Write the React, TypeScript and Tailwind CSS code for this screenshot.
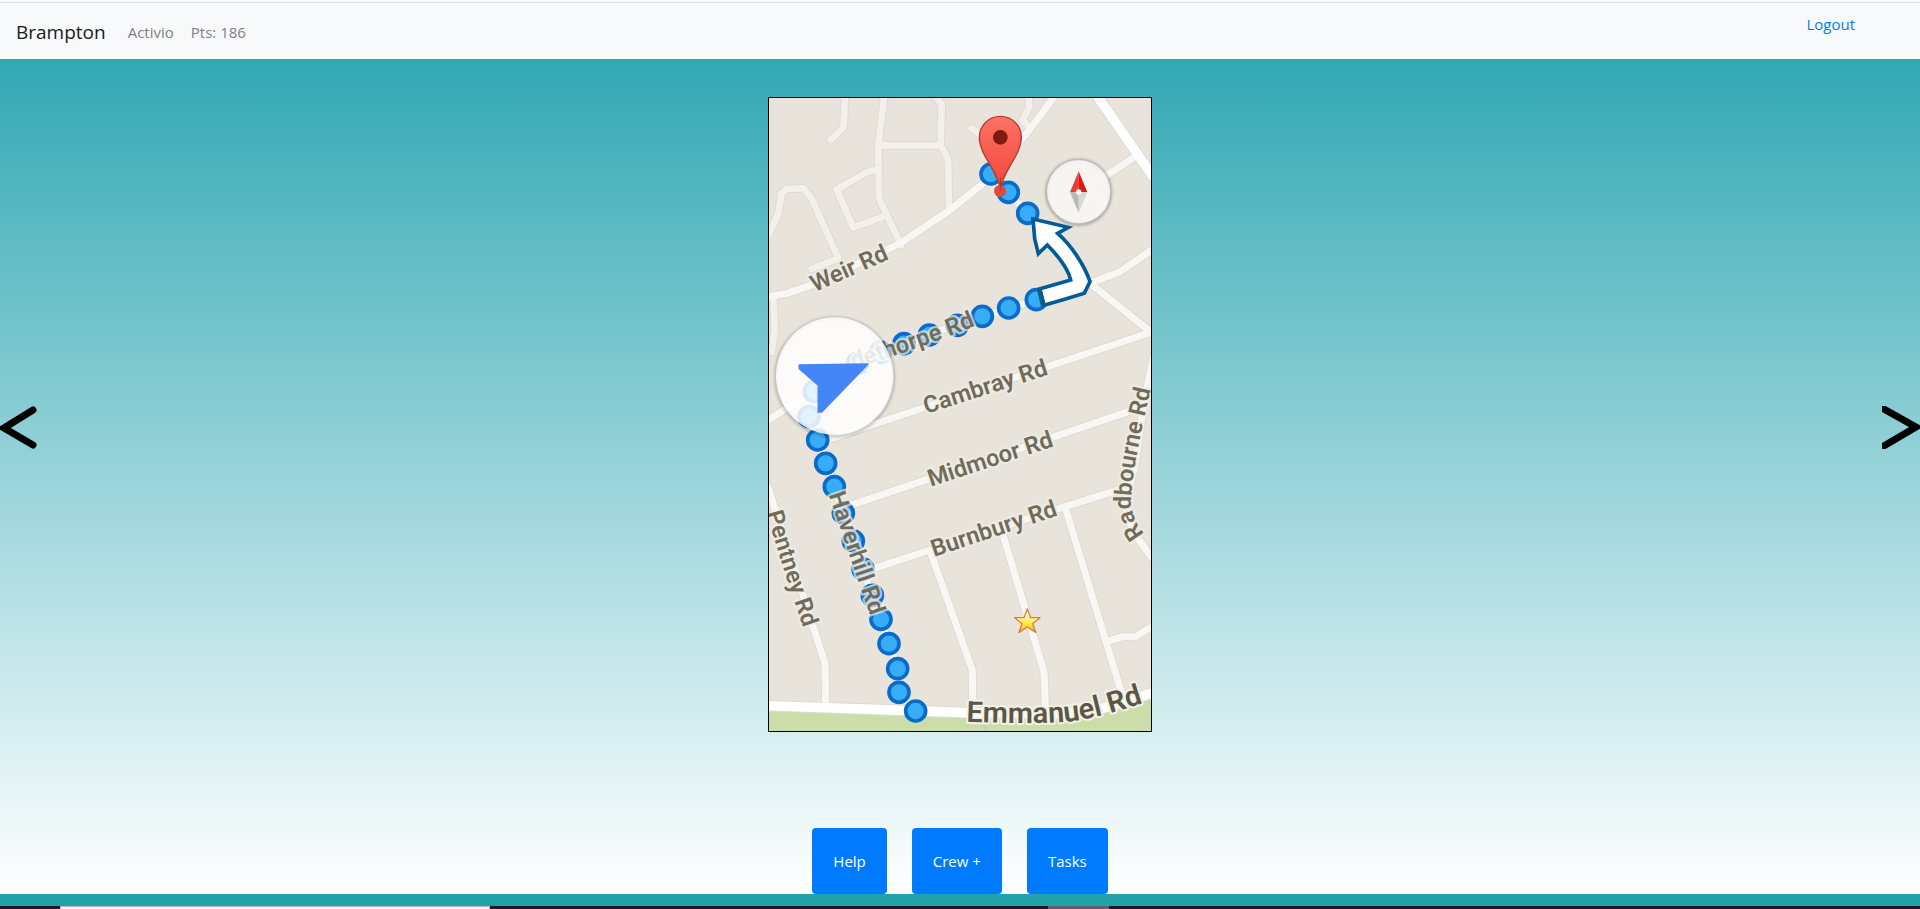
import React from "react";

const minorRoads: string[] = [
  "M231 -5 L227 91 L188 129",
  "M349 -5 L331 144 L333 305 L400 445",
  "M331 145 H512",
  "M500 -10 L521 24 L518 144 L540 186 L543 335",
  "M331 217 L296 226 L206 277 L256 392 L351 357",
  "M0 419 L31 349 L41 289 L56 276 L106 274 L131 304 L211 484 L131 516",
  "M611 94 L676 145",
  "M781 -5 L784 29 L764 69 L786 94",
  "M16 604 L21 699 L11 764",
];

const roads: string[] = [
  "M0 599 L56 589 L146 559 L396 439 L546 339 L646 259 L776 109 L862 -5",
  "M1101 179 L960 272 L1006 319",
  "M1151 459 L1056 524 L966 559 L1141 699",
  "M966 559 L805 608 L500 705 L110 900 L0 969",
  "M1151 705 L176 1029",
  "M669 231 L779 349 L966 559",
  "M1126 929 L236 1229",
  "M1066 1174 L891 1229 L486 1359 L300 1420",
  "M1156 780 L1126 929 L1100 1110 L1072 1220 L1092 1300 L1156 1388",
  "M0 1170 L136 1590 L171 1699 L173 1819",
  "M491 1375 L613 1719 L614 1825",
  "M701 1300 L828 1724 L832 1829",
  "M891 1229 L1061 1789",
  "M1016 1634 L1066 1619 L1101 1619 L1156 1586",
  "M110 900 L149 1029 L389 1715 L393 1786 L443 1842",
];

const mainRoads: string[] = [
  "M986 -5 L1156 240",
  "M-5 1826 L596 1847 L880 1850 L1000 1835 L1156 1787",
];

const routeDots: [number, number][] = [
  [669, 231], [721, 286], [779, 349], [805, 608], [722, 633], [643, 658],
  [568, 685], [484, 714], [408, 740], [338, 766], [268, 799], [139, 884],
  [123, 959], [149, 1029], [173, 1099], [199, 1169], [226, 1248], [256, 1332],
  [285, 1416], [313, 1495], [339, 1567], [363, 1640], [389, 1715], [393, 1786],
  [443, 1842],
];

const roadNames: { id: string; name: string; path: string }[] = [
  { id: "weir", name: "Weir Rd", path: "M140 586 L440 452" },
  { id: "thorpe", name: "dethorpe Rd", path: "M256 814 Q430 766 680 663" },
  { id: "cambray", name: "Cambray Rd", path: "M475 951 L925 806" },
  { id: "midmoor", name: "Midmoor Rd", path: "M488 1169 L940 1021" },
  { id: "burnbury", name: "Burnbury Rd", path: "M498 1380 L958 1226" },
  { id: "haverhill", name: "Haverhill Rd", path: "M182 1193 L330 1625" },
  { id: "pentney", name: "Pentney Rd", path: "M-4 1248 Q44 1420 140 1690" },
  {
    id: "radbourne",
    name: "Radbourne Rd",
    path: "M1130 1310 Q1094 1272 1090 1217 C1090 1149 1104 1069 1156 840",
  },
];

function RouteMap() {
  return (
    <svg
      viewBox="3 3 1146 1899"
      role="img"
      aria-label="Route map"
      className="block w-full bg-[#e8e4dc]"
    >
      <defs>
        <linearGradient id="pin" x1="0" y1="0" x2="0" y2="1">
          <stop offset="0" stopColor="#fb7267" />
          <stop offset="1" stopColor="#f3453a" />
        </linearGradient>
        <linearGradient id="star" x1="0" y1="0" x2="0" y2="1">
          <stop offset="0.2" stopColor="#fffbe0" />
          <stop offset="0.65" stopColor="#ffe83c" />
          <stop offset="1" stopColor="#f9a825" />
        </linearGradient>
        <filter id="soft" x="-20%" y="-20%" width="140%" height="140%">
          <feGaussianBlur stdDeviation="4" />
        </filter>
        {roadNames.map((r) => (
          <path key={r.id} id={r.id} d={r.path} />
        ))}
        <path id="emmanuel" d="M594 1874 Q800 1882 900 1874 Q1000 1864 1190 1796" />
      </defs>

      <path
        d="M0 1839 L596 1862 L900 1866 L1020 1845 L1152 1805 V1905 H0Z"
        fill="#cbdea9"
      />
      <path d="M645 1884 L660 1902" stroke="#d3c6c4" strokeWidth="8" />
      <g fill="none" strokeLinecap="round" strokeLinejoin="round">
        <g stroke="#dedad1">
          {minorRoads.map((d) => <path key={d} d={d} strokeWidth="26" />)}
          {roads.map((d) => <path key={d} d={d} strokeWidth="27" />)}
          {mainRoads.map((d) => <path key={d} d={d} strokeWidth="35" />)}
        </g>
        {minorRoads.map((d) => <path key={d} d={d} stroke="#f3f0eb" strokeWidth="20" />)}
        {roads.map((d) => <path key={d} d={d} stroke="#f9f7f3" strokeWidth="21" />)}
        {mainRoads.map((d) => <path key={d} d={d} stroke="#ffffff" strokeWidth="29" />)}
      </g>

      <g fill="#38adf7" stroke="#0a6cc8" strokeWidth="11">
        {routeDots.map(([x, y]) => <circle key={`${x}-${y}`} cx={x} cy={y} r="30" />)}
      </g>

      <g
        fontFamily="Roboto, 'Liberation Sans', sans-serif"
        fontWeight="600"
        paintOrder="stroke"
        strokeLinejoin="round"
      >
        <g fontSize="71" fill="#716b5a" stroke="#f0ede7" strokeOpacity="0.7" strokeWidth="13">
          {roadNames.map((r) => (
            <text key={r.id}>
              <textPath href={`#${r.id}`}>{r.name}</textPath>
            </text>
          ))}
        </g>
        <text fontSize="87" fill="#5b5646" stroke="#f2f1ea" strokeWidth="12">
          <textPath href="#emmanuel">Emmanuel Rd</textPath>
        </text>
      </g>

      <path
        d="M778 1535 L788 1562 L816 1562 L794 1580 L803 1606 L778 1590 L753 1606 L762 1580 L740 1562 L768 1562Z"
        fill="url(#star)"
        stroke="#d9803d"
        strokeWidth="4"
        strokeLinejoin="round"
      />

      <path
        d="M795 366 L830 374 L901 391 L869 409 C905 440 948 500 966 554 L949 589 L890 607 L828 625 L814 576 L908 549 Q898 505 838 444 L811 470 L800 425Z"
        fill="#ffffff"
        stroke="#005c99"
        strokeWidth="11"
      />
      <path d="M814 576 L826 627" stroke="#005c88" strokeWidth="15" />

      <path
        d="M697 280 C692 222 634 176 634 121 A63 63 0 0 1 760 121 C760 176 702 222 697 280Z"
        fill="url(#pin)"
        stroke="#b83a31"
        strokeWidth="4"
      />
      <circle cx="697" cy="121" r="22" fill="#801a10" />
      <circle cx="696" cy="282" r="18" fill="#e04a3f" />
      <path d="M697 240 V280" stroke="#b53028" strokeWidth="3" />

      <circle cx="932" cy="286" r="96" fill="none" stroke="#000000" strokeOpacity="0.4" strokeWidth="6" filter="url(#soft)" />
      <circle cx="932" cy="284" r="96" fill="#f8f7f5" fillOpacity="0.88" stroke="#b4b1ab" strokeWidth="2" />
      <path d="M932 223 L906 286 H932Z" fill="#ef3b36" />
      <path d="M932 223 L958 286 H932Z" fill="#d91a16" />
      <path d="M932 348 L906 286 H932Z" fill="#b9b9b9" />
      <path d="M932 348 L958 286 H932Z" fill="#d8d8d8" />
      <circle cx="932" cy="285" r="8" fill="#ffffff" />

      <circle cx="200" cy="840" r="177" fill="none" stroke="#000000" strokeOpacity="0.3" strokeWidth="6" filter="url(#soft)" />
      <circle cx="200" cy="837" r="176" fill="#ffffff" fillOpacity="0.85" />
      <path
        d="M94 804 L300 801 L161 945 L151 945 L151 864 L94 815Z"
        fill="#4486f8"
        stroke="#4486f8"
        strokeWidth="5"
        strokeLinejoin="round"
      />
    </svg>
  );
}

function Arrow({ direction }: { direction: "left" | "right" }) {
  const left = direction === "left";
  return (
    <button type="button" aria-label={left ? "Previous" : "Next"} className="cursor-pointer">
      <svg viewBox="0 0 38 43" className="block h-[43px] w-[38px]" fill="none" stroke="#000" strokeWidth="7">
        <path
          d={left ? "M33 4 L4 22 L33 39" : "M0 2 L34 21 L0 41"}
          strokeLinecap={left ? "round" : "square"}
        />
      </svg>
    </button>
  );
}

const actions = ["Help", "Crew +", "Tasks"];

export default function App() {
  return (
    <div className="flex min-h-screen flex-col bg-[#23a1ad] font-['Open_Sans','Noto_Sans',sans-serif] text-[15px] leading-6">
      <div className="flex grow flex-col bg-[linear-gradient(#23a2ae,#ffffff)]">
        <header className="border-t-2 border-[#f8f9fa] bg-[#f8f9fa]">
          <nav className="flex h-[57px] items-center border-t border-[#dedede] pt-0.5 pr-[65px] pl-4">
            <a href="#home" className="mr-[22px] text-[19px] text-[#1a1a1a]">Brampton</a>
            <a href="#activio" className="mr-[17px] text-[#808183]">Activio</a>
            <span className="text-[#808183]">Pts: 186</span>
            <a href="#logout" className="mt-[7px] ml-auto self-start text-[#007bff]">Logout</a>
          </nav>
        </header>

        <main className="flex grow flex-col">
          <div className="flex items-center justify-between">
            <Arrow direction="left" />
            <div className="pt-[38px] pb-16">
              <div className="w-[384px] border border-black">
                <RouteMap />
              </div>
            </div>
            <Arrow direction="right" />
          </div>
          <div className="mt-auto flex justify-center gap-[25px] pt-8">
            {actions.map((label) => (
              <button
                key={label}
                type="button"
                className="h-[66px] cursor-pointer rounded bg-[#007bff] px-[21px] text-white"
              >
                {label}
              </button>
            ))}
          </div>
        </main>
      </div>

      <footer>
        <div className="h-3" />
        <div className="flex h-[3px] bg-[#211b1c]">
          <div className="ml-[60px] w-[430px] border-x border-t border-[#b9b9b9] bg-[#f3f3f3]" />
          <div className="ml-[558px] w-[61px] bg-[#666061]" />
        </div>
      </footer>
    </div>
  );
}
